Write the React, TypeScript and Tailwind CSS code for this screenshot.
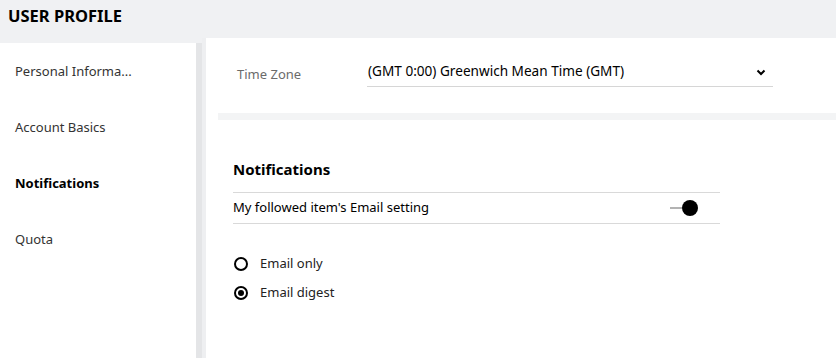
import React, { useState } from 'react';

const MENU = ['Personal Informa...', 'Account Basics', 'Notifications', 'Quota'];

const App: React.FC = () => {
  const [active] = useState('Notifications');
  const [digest, setDigest] = useState(true);

  return (
    <div className="w-[836px] h-[358px] overflow-hidden bg-[#f0f1f3] font-['Noto_Sans',sans-serif] text-[#1a1a1a]">
      <div className="h-[38px] flex items-center pl-2 pb-[6px]">
        <h1 className="text-[16.5px] font-bold text-black">USER PROFILE</h1>
      </div>

      <div className="flex h-[320px]">
        <div className="w-[196px] mt-[5px] bg-white pt-[19px]">
          {MENU.map((item) => (
            <div
              key={item}
              className={`h-[56px] pl-[15px] text-[13px] ${
                item === active ? 'font-bold text-black' : 'text-[#333]'
              }`}
            >
              {item}
            </div>
          ))}
        </div>
        <div className="w-[6px] mt-[5px] bg-[#e4e5e7]" />
        <div className="w-[4px] bg-[#eeeff1]" />

        <div className="flex-1 bg-white">
          <div className="flex items-start pt-[22px] h-[75px]">
            <div className="w-[161px] pl-[31px] pt-[5px] text-[13px] text-[#6b6b6b]">Time Zone</div>
            <div className="w-[406px] h-[27px] border-b border-[#d6d6d6] flex items-center justify-between pl-[1px] pr-[6px]">
              <span className="text-[13.6px] text-black -mt-[3px]">(GMT 0:00) Greenwich Mean Time (GMT)</span>
              <svg width="12" height="12" viewBox="0 0 12 12" className="mt-[-3px]">
                <path d="M2.5 4.5 L6 8 L9.5 4.5" fill="none" stroke="#000" strokeWidth="2" />
              </svg>
            </div>
          </div>
          <div className="ml-[12px] h-[7px] bg-[#f3f4f5]" />

          <div className="pl-[27px] pt-[38px] w-[514px]">
            <h2 className="text-[15px] font-bold text-black h-[34px]">Notifications</h2>
            <div className="border-y border-[#d9d9d9] h-[32px] flex items-center justify-between">
              <span className="text-[13px] text-black">My followed item's Email setting</span>
              <div className="flex items-center mr-[22px]">
                <div className="w-[12px] h-[2px] bg-[#b3b3b3]" />
                <div className="w-[16px] h-[16px] rounded-full bg-black" />
              </div>
            </div>

            <div className="pt-[31px] pl-[1px] flex flex-col gap-[12px]">
              {[
                { label: 'Email only', on: !digest },
                { label: 'Email digest', on: digest },
              ].map((r) => (
                <label
                  key={r.label}
                  className="flex items-center gap-[12px] h-[17px] cursor-pointer"
                  onClick={() => setDigest(r.label === 'Email digest')}
                >
                  <span className="w-[14px] h-[14px] rounded-full border-2 border-black flex items-center justify-center">
                    {r.on && <span className="w-[6px] h-[6px] rounded-full bg-black" />}
                  </span>
                  <span className="text-[13px] text-[#222]">{r.label}</span>
                </label>
              ))}
            </div>
          </div>
        </div>
      </div>
    </div>
  );
};

export default App;
